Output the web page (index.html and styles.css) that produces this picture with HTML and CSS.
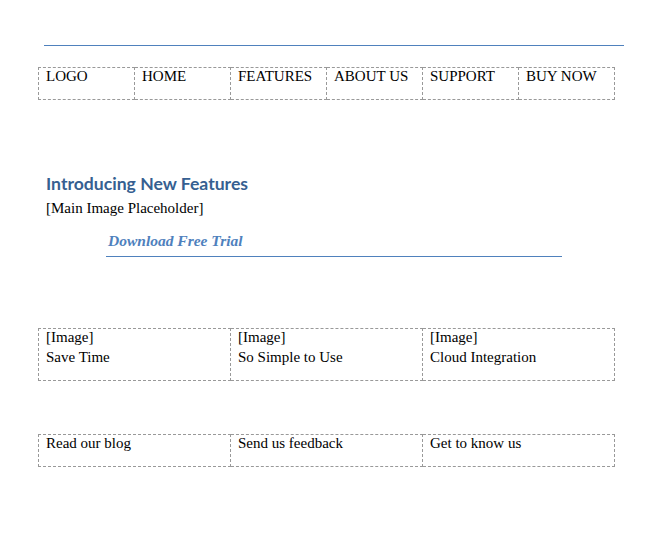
FILE: index.html
```html
<!DOCTYPE html>
<html>
<head>
<meta charset="utf-8">
<link rel="stylesheet" href="styles.css">
</head>
<body>
<div class="page">
  <div class="rule"></div>
  <table class="grid nav">
    <tr>
      <td><div class="cell">LOGO</div></td>
      <td><div class="cell">HOME</div></td>
      <td><div class="cell">FEATURES</div></td>
      <td><div class="cell">ABOUT US</div></td>
      <td><div class="cell">SUPPORT</div></td>
      <td><div class="cell">BUY NOW</div></td>
    </tr>
  </table>
  <h1 class="title">Introducing New Features</h1>
  <p class="placeholder">[Main Image Placeholder]</p>
  <div class="cta"><span>Download Free Trial</span></div>
  <table class="grid features">
    <tr>
      <td><div class="cell">[Image]<br>Save Time</div></td>
      <td><div class="cell">[Image]<br>So Simple to Use</div></td>
      <td><div class="cell">[Image]<br>Cloud Integration</div></td>
    </tr>
  </table>
  <table class="grid footer">
    <tr>
      <td><div class="cell">Read our blog</div></td>
      <td><div class="cell">Send us feedback</div></td>
      <td><div class="cell">Get to know us</div></td>
    </tr>
  </table>
</div>
</body>
</html>
```
FILE: styles.css
```css
html, body {
  margin: 0;
  padding: 0;
  background: #fff;
}
body {
  font-family: "Liberation Serif", "DejaVu Serif", serif;
  font-size: 15px;
  color: #000;
}
.page {
  width: 663px;
  padding-top: 45px;
}
.rule {
  margin-left: 44px;
  width: 580px;
  height: 1px;
  background: #4f81bd;
}
.grid {
  border-collapse: collapse;
  margin-left: 38px;
  width: 577px;
  table-layout: fixed;
}
.grid td {
  border: 1px dashed #999;
  vertical-align: top;
  padding: 0 7px;
  line-height: 20px;
  box-sizing: border-box;
}
.cell {
  margin-top: -2px;
}
.nav {
  margin-top: 21px;
}
.nav td {
  height: 32px;
}
.title {
  margin: 73px 0 0 46px;
  font-family: Lato, "Open Sans", sans-serif;
  font-weight: bold;
  font-size: 17.6px;
  line-height: 22px;
  color: #365f91;
}
.placeholder {
  margin: 3px 0 0 46px;
  line-height: 20px;
}
.cta {
  margin: 13px 0 0 106px;
  width: 454px;
  border-bottom: 1px solid #4f81bd;
  padding: 0 0 5px 2px;
  font-style: italic;
  font-weight: bold;
  font-size: 15.5px;
  line-height: 20px;
  color: #4f81bd;
}
.features {
  margin-top: 71px;
}
.features td {
  height: 52px;
}
.footer {
  margin-top: 53px;
}
.footer td {
  height: 32px;
}
```
